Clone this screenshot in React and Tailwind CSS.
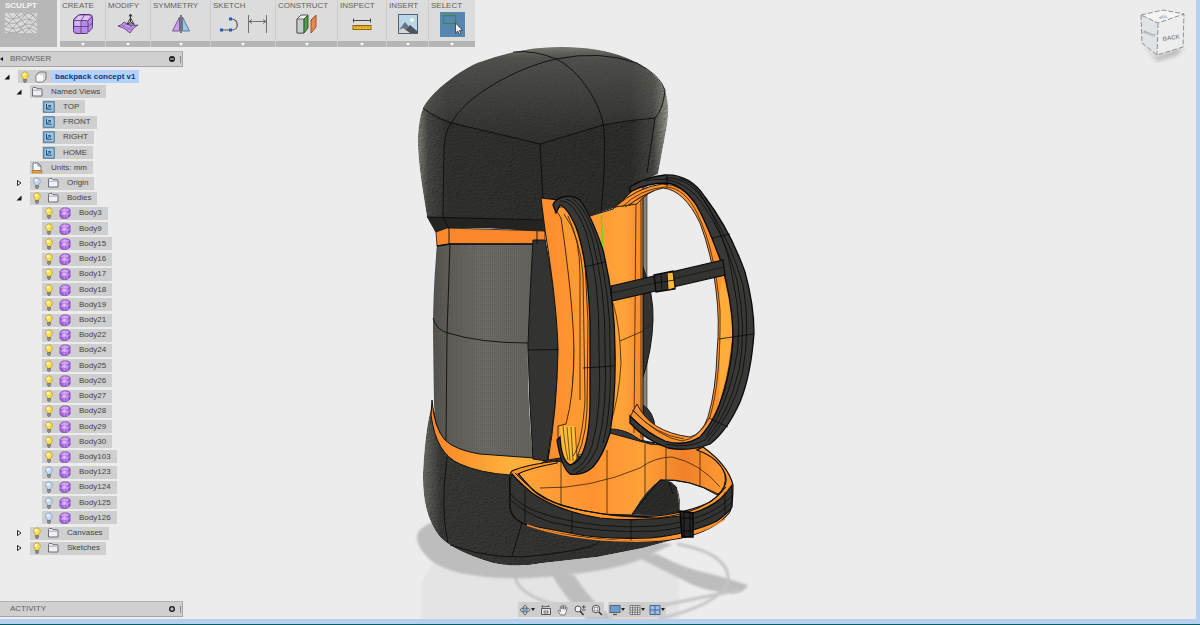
import { clsx } from 'clsx'

const TREE = [
  { level: 0, arrow: 'open', bulb: 'on', icon: 'component', label: 'backpack concept v1', active: true },
  { level: 1, arrow: 'open', icon: 'folder', label: 'Named Views' },
  { level: 2, icon: 'view', label: 'TOP' },
  { level: 2, icon: 'view', label: 'FRONT' },
  { level: 2, icon: 'view', label: 'RIGHT' },
  { level: 2, icon: 'view', label: 'HOME' },
  { level: 1, icon: 'units', label: 'Units: mm' },
  { level: 1, arrow: 'closed', bulb: 'off', icon: 'folder', label: 'Origin' },
  { level: 1, arrow: 'open', bulb: 'on', icon: 'folder', label: 'Bodies' },
  ...[3, 9, 15, 16, 17, 18, 19, 21, 22, 24, 25, 26, 27, 28, 29, 30, 103].map(n => ({
    level: 2, bulb: 'on', icon: 'body', label: `Body${n}`,
  })),
  ...[123, 124, 125, 126].map(n => ({ level: 2, bulb: 'off', icon: 'body', label: `Body${n}` })),
  { level: 1, arrow: 'closed', bulb: 'on', icon: 'folder', label: 'Canvases' },
  { level: 1, arrow: 'closed', bulb: 'on', icon: 'folder', label: 'Sketches' },
]

const INDENT = ['w-[18px] pr-2', 'w-[30px] pr-2', 'w-[42px]']

function Bulb({ on }) {
  return (
    <svg viewBox="0 0 12 12" className="size-3 shrink-0" aria-hidden="true">
      <path d="M6 .8a3.4 3.4 0 0 1 2 6.1L7.6 8.4H4.4L4 6.9A3.4 3.4 0 0 1 6 .8z" fill={on ? '#ffe24a' : '#c4daf8'} stroke={on ? '#b5942d' : '#7d93b8'} strokeWidth=".7" />
      <circle cx="5" cy="3.3" r="1.3" fill="#fff" opacity=".85" />
      <path d="M4.5 8.5h3v2L6.7 11.5H5.3l-.8-1z" fill="#8b8b8b" stroke="#555" strokeWidth=".5" />
    </svg>
  )
}

function TreeIcon({ name }) {
  return (
    <svg viewBox="0 0 12 12" className="size-3 shrink-0" aria-hidden="true">
      {name === 'component' && (
        <>
          <path d="M1 4.500 3.500 1.500Q4 1 5 1h5q1 0 1 1v6l-2.500 2.500q-.5.5-1 .5H2q-1 0-1-1z" fill="#d8d8d8" stroke="#5a5a5a" strokeWidth=".8" />
          <rect x="1.500" y="4" width="6.500" height="6.500" rx="1" fill="#fafafa" />
        </>
      )}
      {name === 'folder' && (
        <>
          <path d="M1.500 10v-7.500q0-1 1-1h2.500l1 1.200h4q1 0 1 1V10z" fill="#eef0f4" stroke="#5c616b" strokeWidth=".9" />
          <path d="M2 4.200h8.500" stroke="#9aa0ab" strokeWidth=".8" />
        </>
      )}
      {name === 'view' && (
        <>
          <rect x=".8" y=".8" width="10.4" height="10.4" fill="#9fc3df" stroke="#3c6f97" />
          <path d="M3.500 2.800v5.400h5.200M4 7.700l3-3M5.300 4.500h2v2" fill="none" stroke="#1e5079" />
        </>
      )}
      {name === 'units' && (
        <>
          <path d="M2 8.500v-7.500h5l3 3v4.500z" fill="#f7f7fa" stroke="#5e6370" strokeWidth=".8" />
          <path d="M7 1v3h3" fill="none" stroke="#5e6370" strokeWidth=".8" />
          <rect x="1.200" y="8.800" width="9.800" height="2.200" fill="#f2a73a" stroke="#a76a14" strokeWidth=".6" />
        </>
      )}
      {name === 'body' && (
        <>
          <path d="M1 3.500 3.500 1h5L11 2.500V9l-3 2.300H3L1 9.500z" fill="#a463dc" stroke="#7434b0" strokeWidth=".8" />
          <path d="M1.500 3.700 4 1.500h4.300l2 1.300L8 4.400H3z" fill="#cf9ef3" />
          <path d="M3.300 5h4v2h-4z" fill="#d9b3f7" />
          <path d="M1.200 6.600 3 7.500h5l3-1.800M5.200 4.500v6.600M8 4.500v6.500M5 1.300l1 3" fill="none" stroke="#e6ccfb" strokeWidth=".5" />
        </>
      )}
    </svg>
  )
}

function TreeRow({ item }) {
  const { level, arrow, bulb, icon, label, active } = item
  return (
    <li className="flex h-[13px] items-center">
      <span className={clsx('flex shrink-0 justify-end', INDENT[level])}>
        {arrow && (
          <button type="button" aria-label={`Toggle ${label}`}>
            <svg viewBox="0 0 6 6" className="size-[6px]">
              {arrow === 'open'
                ? <path d="M5.500.500v5H.500z" fill="#111" />
                : <path d="M1.500.500 5 3 1.500 5.500z" fill="#fff" stroke="#111" strokeWidth=".9" />}
            </svg>
          </button>
        )}
      </span>
      <span className="flex h-full items-center bg-[#cfcfcf]">
        {bulb && <span className="pl-px"><Bulb on={bulb === 'on'} /></span>}
        <span className={clsx(level === 0 ? 'px-1' : bulb ? 'pr-2 pl-1' : 'pr-2 pl-px')}>
          <TreeIcon name={icon} />
        </span>
        <span className={clsx('flex h-full items-center', active ? 'bg-[#b3d3fc] px-1 font-bold text-[#14377d]' : 'pr-[6px] text-[#444]')}>
          {label}
        </span>
      </span>
    </li>
  )
}

function SculptIcon() {
  return (
    <svg viewBox="0 0 32 20" className="h-5 w-8">
      <rect width="32" height="20" fill="#dadada" />
      <path d="M0 3q8 6 16 0t16 2M0 8q8 5 16 0t16 2M0 13q9 5 17 0t15 2M0 18q9 4 17-1t15 2M0 7 12 20M3 0l17 20M10 0l18 20M18 0l14 15M26 0l6 7M14 0 0 14M22 0 3 20M30 0 12 20M32 7 20 20" fill="none" stroke="#999" strokeWidth=".7" />
    </svg>
  )
}

const CreateIcon = () => (
  <svg viewBox="0 0 22 22" className="size-[22px]">
    <path d="M1.500 8q0-2 1.500-3l3-2.500Q7 1.500 9 1.500h8q3.500 0 3.500 3v9q0 2-1.500 3l-2.500 2.500q-1 1.500-3 1.500H5q-3.500 0-3.500-3z" fill="#b98be8" stroke="#553573" />
    <path d="M2.500 7.500 6.500 3h12l-3 4z" fill="#dfc5fa" />
    <rect x="3" y="8" width="6" height="5" fill="#d3b2f5" />
    <path d="M2 7.500h12q2 0 2 2V19M16 8l4-4M2 13.500h14l4.500-3.500M9 7.500v13M9 7.500 12.500 2" fill="none" stroke="#553573" strokeWidth=".8" />
  </svg>
)

const ModifyIcon = () => (
  <svg viewBox="0 0 22 22" className="size-[22px]">
    <path d="M1 13q3 0 6-4 5 5 14 3-5 2-8 8-6-6-12-7z" fill="#c599ee" stroke="#6b488c" />
    <path d="m4 11.500 11 6M7 9q6 3 10 7M5 15l5-5M10 17l6-5" stroke="#8f62b5" fill="none" strokeWidth=".7" />
    <path d="M13.500 9V2M13.500 9 10 11.500M13.500 9l4 2.500M12 3.500l1.500-2.500L15 3.500" fill="none" stroke="#333" />
    <path d="M13.500 5 17 11h-7z" fill="none" stroke="#333" strokeWidth=".9" />
  </svg>
)

const SymmetryIcon = () => (
  <svg viewBox="0 0 22 22" className="size-[22px]">
    <path d="M9.500 4v14h-7z" fill="#c99df0" stroke="#775a92" />
    <path d="M12.500 4v14h7z" fill="#9ec4e8" stroke="#587b9c" />
    <path d="M11 2v18" stroke="#333" strokeWidth="1.200" />
  </svg>
)

const SketchIcon = () => (
  <svg viewBox="0 0 50 22" className="h-[22px] w-[50px]">
    <path d="M3 17h11c7 0 7-10 0-11h-2" fill="none" stroke="#4d5663" strokeWidth="1.200" />
    <path d="M2 15.500h3v3H2zM11 15.500h3v3h-3zM11 4.500h3v3h-3z" fill="#245dbb" />
    <path d="M30.500 2v18M48.500 2v18M31 8.500h17M34 6.500l-3 2 3 2M45 6.500l3 2-3 2" fill="none" stroke="#666" strokeWidth=".9" />
  </svg>
)

const ConstructIcon = () => (
  <svg viewBox="0 0 22 22" className="size-[22px]">
    <path d="M1 6 5 2h7l-4 4v14H1z" fill="#eee" stroke="#555" />
    <path d="M1 6h7v14H1z" fill="#c9cccf" stroke="#555" strokeWidth=".8" />
    <path d="M8 6l4-4v13l-4 5z" fill="#539b4b" stroke="#2d5c2a" />
    <path d="m15 7 5-5v12l-5 6z" fill="#ec8654" stroke="#a04c22" />
  </svg>
)

const InspectIcon = () => (
  <svg viewBox="0 0 22 22" className="size-[22px]">
    <path d="M2 7.500h18M2.500 5.500v4M19.500 5.500v4" stroke="#444" fill="none" />
    <rect x="2" y="12.500" width="18" height="4" fill="#f6bd24" stroke="#8a6510" />
    <path d="M5 13v2M8 13v1.500M11 13v2M14 13v1.500M17 13v2" stroke="#8a6510" strokeWidth=".7" />
  </svg>
)

const InsertIcon = () => (
  <svg viewBox="0 0 22 22" className="size-[22px]">
    <rect x="1.500" y="1.500" width="19" height="19" fill="#b9d8ee" stroke="#52616f" />
    <circle cx="15" cy="7" r="2" fill="#fff6c0" />
    <path d="M2 17l6-8 5 6v5H2z" fill="#6b737c" />
    <path d="m7 20 6-8 7 6v2z" fill="#4c545e" />
    <path d="m2 17 4-2 7 5H2z" fill="#d3d8dc" />
  </svg>
)

const SelectIcon = () => (
  <svg viewBox="0 0 25 25" className="size-[25px]">
    <rect width="25" height="25" fill="#5587b1" />
    <rect x="3.500" y="3.500" width="12" height="8" fill="none" stroke="#42883c" strokeWidth="1.200" />
    <path d="M15.500 11v10l2.300-2 1.500 3.300 1.500-.8-1.400-3 3-.3z" fill="#fff" stroke="#333" strokeWidth=".8" />
  </svg>
)

const TOOLS = [
  { label: 'CREATE', Icon: CreateIcon, width: 'w-[46px]' },
  { label: 'MODIFY', Icon: ModifyIcon, width: 'w-[45px]' },
  { label: 'SYMMETRY', Icon: SymmetryIcon, width: 'w-[60px]' },
  { label: 'SKETCH', Icon: SketchIcon, width: 'w-[65px]' },
  { label: 'CONSTRUCT', Icon: ConstructIcon, width: 'w-[62px]' },
  { label: 'INSPECT', Icon: InspectIcon, width: 'w-[49px]' },
  { label: 'INSERT', Icon: InsertIcon, width: 'w-[42px]' },
  { label: 'SELECT', Icon: SelectIcon, width: 'w-[46px]' },
]

function Toolbar() {
  return (
    <nav className="flex h-[47px] gap-[3px]" aria-label="Tools">
      <button type="button" className="flex w-[57px] flex-col items-start bg-[#b7b7b7] pt-px pl-[5px] font-bold text-[#f5f5f5]">
        <span className="leading-[10px]">SCULPT</span>
        <span className="pt-[2px]"><SculptIcon /></span>
      </button>
      <div className="flex bg-[#dcdcdc]">
        {TOOLS.map(({ label, Icon, width }) => (
          <button key={label} type="button" className={clsx('flex flex-col border-r border-[#cdcdcd] text-left text-[#606060] last:border-r-0', width)}>
            <span className="pt-px pl-[2px] leading-[10px]">{label}</span>
            <span className="flex w-full flex-1 items-center justify-center pb-1"><Icon /></span>
            <span className="flex h-[6px] w-full items-center justify-center bg-[#b5b5b5]">
              <svg viewBox="0 0 4 3" className="h-[3px] w-1"><path d="M0 0h4L2 3z" fill="#fff" /></svg>
            </span>
          </button>
        ))}
      </div>
    </nav>
  )
}

function PanelHeader({ title, collapse, plus }) {
  return (
    <header className="flex h-4 w-[183px] items-center border-y border-r border-t-[#b2b2b2] border-r-[#a5a5a5] border-b-[#a5a5a5] bg-[#d0d0d0] text-[#606060]">
      <span className="w-[10px]">
        {collapse && <svg viewBox="0 0 3 4" className="h-1 w-[3px]"><path d="M3 0v4L0 2z" fill="#111" /></svg>}
      </span>
      <h2 className="flex-1">{title}</h2>
      <button type="button" aria-label={`${title} options`} className="mr-[5px]">
        <svg viewBox="0 0 6 6" className="size-[6px]">
          <circle cx="3" cy="3" r="3" fill="#1c1c1c" />
          <path d={plus ? 'M1.200 3h3.600M3 1.200v3.600' : 'M1.200 3h3.600'} stroke="#eee" />
        </svg>
      </button>
      <span className="mr-px h-[7px] w-px bg-[#888]" />
    </header>
  )
}

const NAV_LEFT = [
  {
    name: 'Orbit', menu: true, art: (
      <>
        <ellipse cx="6" cy="6" rx="5" ry="2" fill="none" stroke="#555" strokeWidth=".8" />
        <ellipse cx="6" cy="6" rx="2" ry="5" fill="none" stroke="#555" strokeWidth=".8" />
        <circle cx="6" cy="6" r="1.500" fill="#5da4e6" />
      </>
    ),
  },
  {
    name: 'Look at', art: (
      <>
        <path d="M1.500 4.500h9v6h-9z" fill="#e8e8e8" stroke="#555" />
        <path d="M4 7h4v2H4zM2 2.500h7M3 1 1.500 2.500 3 4M8 1l1.500 1.500" fill="none" stroke="#555" strokeWidth=".8" />
      </>
    ),
  },
  {
    name: 'Pan', art: (
      <path d="M3.500 11 1 7q0-1.200 1.200-.6L3.300 7.500V2.500q.9-1 1.400 0L5 5V1.500q.9-1 1.500 0V5l.6-3q1-.8 1.400.2L8 5.500l1-2q1-.5 1.200.5L9 8.500 8 11z" fill="#f2f2f2" stroke="#555" strokeWidth=".7" />
    ),
  },
  {
    name: 'Zoom', art: (
      <>
        <circle cx="4" cy="5" r="3" fill="#eef4f8" stroke="#555" />
        <path d="m6 7 3.500 4" stroke="#333" strokeWidth="1.500" />
        <path d="M8 3h3.500M9.750 1.200v3.600M8 6h3.500" stroke="#333" strokeWidth=".8" />
      </>
    ),
  },
  {
    name: 'Fit', art: (
      <>
        <circle cx="5" cy="5" r="3.800" fill="#e4e4e4" stroke="#555" />
        <rect x="3.300" y="3.300" width="3.500" height="3.500" fill="#fff" stroke="#777" strokeWidth=".6" />
        <path d="M8 8l3 3" stroke="#333" strokeWidth="1.500" />
      </>
    ),
  },
]

const NAV_RIGHT = [
  {
    name: 'Display settings', menu: true, art: (
      <>
        <rect x="1" y="1.500" width="10" height="7" fill="#6c9dd2" stroke="#58636e" />
        <path d="M4 10.500h4" stroke="#555" strokeWidth="1.300" />
      </>
    ),
  },
  {
    name: 'Grid and snaps', menu: true, art: (
      <path d="M1 1.500h10v9H1zM3.500 1.500v9M6 1.500v9M8.500 1.500v9M1 3.750h10M1 6h10M1 8.250h10" fill="#eee" stroke="#676767" strokeWidth=".8" />
    ),
  },
  {
    name: 'Viewports', menu: true, art: (
      <path d="M1 1.500h10v9H1zM6 1.500v9M1 6h10" fill="#9fc0e5" stroke="#3e6899" />
    ),
  },
]

function NavGroup({ items, gap }) {
  return (
    <div className={clsx('flex h-[15px] items-center bg-[#cecece] px-px', gap)}>
      {items.map(({ name, menu, art }) => (
        <button key={name} type="button" aria-label={name} className="flex items-center">
          <svg viewBox="0 0 12 12" className="size-3">{art}</svg>
          {menu && <svg viewBox="0 0 4 3" className="h-[3px] w-1"><path d="M0 0h4L2 3z" fill="#222" /></svg>}
        </button>
      ))}
    </div>
  )
}

function ViewCube() {
  return (
    <svg viewBox="0 0 60 60" className="absolute top-[5px] right-1 size-[60px]" role="img" aria-label="View cube">
      <defs>
        <filter id="cubeBlur"><feGaussianBlur stdDeviation="2" /></filter>
      </defs>
      <path d="M8 36 24 52l28-10-7 8-20 6z" fill="#777" opacity=".5" filter="url(#cubeBlur)" />
      <path d="m9 10 22-5 21 4-26 9z" fill="#f5f5f5" />
      <path d="m9 10 17 8-1 32-15-12z" fill="#e2e3e4" />
      <path d="m26 18 26-9-1 33-26 8z" fill="#ededed" />
      <path d="m9 10 22-5 21 4-26 9zM9 10l1 28 15 12 26-8 1-33M26 18l-1 32" fill="none" stroke="#8b9098" strokeDasharray="5 2" />
      <text x="31" y="36" transform="rotate(-9 31 36)" fontSize="6" fontWeight="bold" fill="#8b9099">BACK</text>
      <text x="11" y="28" transform="rotate(20 11 28)" fontSize="4" fontWeight="bold" fill="#8f949d">RIGHT</text>
      <text x="35" y="10" transform="rotate(172 35 10)" fontSize="4" fontWeight="bold" fill="#8f949d">TOP</text>
    </svg>
  )
}

const TOP_BAG = 'M427 217C423 190 417 160 418 135Q419 118 423 108C430 94 455 73 477 63Q520 47 560 47Q600 47 627 58Q655 70 665 90Q670 105 667 125L658 174 645 180Q630 193 620 206L590 216 543 232Q480 226 447 229L436 233Z'
const BOTTOM_BAG = 'M432 404Q425 430 423 473Q422 515 440 537Q455 552 493 563Q515 568 543 563L597 557 643 548 680 538V500Q679 488 672 482L560 450 445 440Z'
const POCKET = 'M437 244Q433 290 433 330L434 404Q436 430 445 440 453 451 480 454L533 459Q527 400 528 345L533 242Z'
const BELT = 'M557 461Q525 465 512 471 509 474 510 482V507Q511 519 527 525 560 537 627 541 665 543 690 536 717 528 729 513 733 508 733 485 728 465 703 447L697 450Q719 458 725 474 730 488 710 502 690 512 657 516 622 518 597 513 545 505 530 487L518 474Q530 468 557 463Z'
const BELT_FACE = 'M512 474Q520 483 532 493 560 512 600 518 640 522 680 516 712 510 726 493L732 485V507Q728 513 717 521 690 534 650 538 600 540 570 533L527 525Q511 519 510 507V480Z'
const LEFT_STRAP = 'M553 205Q555 199 563 197 573 195 580 200 592 217 603 250 615 300 615 350 616 395 610 433 603 456 593 467 583 476 570 474 561 467 557 440L560 437Q561 460 570 465 579 463 583 452 590 435 590 400L590 323Q588 260 576 227 567 207 560 205L556 213Z'
const RIGHT_STRAP = 'M630 187Q645 177 665 175 690 174 705 197 730 230 745 272 754 305 754 333 751 375 740 402 727 431 710 444 690 452 668 448 645 440 630 423V416Q648 434 665 441 685 447 700 437 718 418 727 380 733 355 733 333 732 300 721 262 708 226 697 206 683 185 667 183 646 183 630 192Z'
const RIGHT_RIM = 'M615 207Q638 187 662 184 685 184 697 206 711 230 723 267 733 305 733 333 731 365 723 393 714 427 700 437 683 448 660 441L630 417 637 404Q650 432 690 437 702 434 708 417 716 390 717 353 720 320 716 290 712 255 700 223 684 190 663 188 647 191 637 204Z'

function Backpack() {
  return (
    <svg viewBox="0 0 1196 619" className="absolute inset-0 size-full" role="img" aria-label="Backpack model">
      <defs>
        <linearGradient id="bagTop" x1="0" x2="1">
          <stop offset="0" stopColor="#8a8a82" />
          <stop offset=".04" stopColor="#4c4c49" />
          <stop offset=".12" stopColor="#343433" />
          <stop offset=".85" stopColor="#30302f" />
          <stop offset=".94" stopColor="#4a4a47" />
          <stop offset="1" stopColor="#a6a69e" />
        </linearGradient>
        <linearGradient id="sheen" x1="0" x2="0" y1="0" y2="1">
          <stop offset="0" stopColor="#99998f" stopOpacity=".7" />
          <stop offset=".12" stopColor="#707069" stopOpacity=".5" />
          <stop offset=".6" stopColor="#62625d" stopOpacity=".3" />
          <stop offset="1" stopColor="#444" stopOpacity=".1" />
        </linearGradient>
        <linearGradient id="bagBottom" x1="0" x2="1">
          <stop offset="0" stopColor="#72726c" />
          <stop offset=".07" stopColor="#3b3b39" />
          <stop offset=".9" stopColor="#343433" />
          <stop offset="1" stopColor="#66665f" />
        </linearGradient>
        <linearGradient id="pocket" x1="0" x2="1">
          <stop offset="0" stopColor="#55544f" />
          <stop offset=".15" stopColor="#605f5a" />
          <stop offset=".5" stopColor="#706e68" />
          <stop offset="1" stopColor="#696761" />
        </linearGradient>
        <linearGradient id="orange" x1="0" x2="1">
          <stop offset="0" stopColor="#ff8c2c" />
          <stop offset=".5" stopColor="#ff9a33" />
          <stop offset=".8" stopColor="#ffa43a" />
          <stop offset="1" stopColor="#f88a2b" />
        </linearGradient>
        <linearGradient id="hip" x1="0" x2="1">
          <stop offset="0" stopColor="#ffa63b" />
          <stop offset=".35" stopColor="#ff9230" />
          <stop offset=".6" stopColor="#ffa138" />
          <stop offset=".8" stopColor="#f08029" />
          <stop offset="1" stopColor="#ff9b35" />
        </linearGradient>
        <linearGradient id="lowerBand" x1="0" x2="1">
          <stop offset="0" stopColor="#f98527" />
          <stop offset=".7" stopColor="#ffb23b" />
          <stop offset="1" stopColor="#ffa637" />
        </linearGradient>
        <pattern id="mesh" width="2" height="2" patternUnits="userSpaceOnUse">
          <path d="M0 .5h2M.5 0v2" stroke="#3f3e3b" strokeWidth=".5" opacity=".35" />
        </pattern>
        <filter id="leather" x="0" y="0" width="1" height="1" colorInterpolationFilters="sRGB">
          <feTurbulence type="fractalNoise" baseFrequency=".45 .7" numOctaves="2" seed="4" result="noise" />
          <feDiffuseLighting in="noise" surfaceScale=".9" lightingColor="#fff" result="light">
            <feDistantLight azimuth="60" elevation="62" />
          </feDiffuseLighting>
          <feBlend in="SourceGraphic" in2="light" mode="multiply" result="mixed" />
          <feComposite in="mixed" in2="SourceGraphic" operator="in" />
        </filter>
        <filter id="soft"><feGaussianBlur stdDeviation="1" /></filter>
      </defs>

      {/* floor reflection and shadows */}
      <path d="M422 619v-35q5-20 25-30h210q22 8 22 32v33z" fill="#e4e4e4" filter="url(#soft)" />
      <path d="M598 619q30-8 62 0z" fill="#eed5cb" />
      <g fill="#bdbdbd" filter="url(#soft)">
        <path d="M430 523q-17 8-12 20 8 22 42 30 40 8 85 4 75-6 103-21l25-12-60-5-160-5z" />
        <path d="M552 575h22q15 24 39 44h-26q-23-22-35-44zM637 557l20-3q27 15 58 21l33 10q-3 7-15 9-26-3-40-9-30-15-56-28z" />
        <path d="M677 544q55 10 51 39-10 22-70 36M515 577q4 22 63 33M739 590q-20 4-75 15" fill="none" stroke="#c4c4c4" strokeWidth="3" />
      </g>

      {/* main bag */}
      <path d={BOTTOM_BAG} fill="url(#bagBottom)" filter="url(#leather)" />
      <path d={TOP_BAG} fill="url(#bagTop)" filter="url(#leather)" />
      <path d="M423 108C430 94 455 73 477 63Q520 47 560 47 600 47 627 58 655 70 665 90 667 105 655 118L603 125 540 144 452 123Z" fill="url(#sheen)" />
      <path d="M427 217 443 217 543 221V232Q480 226 447 229L436 233Z" fill="#232322" />
      <path d={POCKET} fill="url(#pocket)" />
      <path d={POCKET} fill="url(#mesh)" />
      <path d="M436 232 447 228 545 231V244H450L437 246Z" fill="#f9882c" stroke="#151515" strokeWidth=".8" />
      <path d="M437 246 450 244H533" fill="none" stroke="#111" strokeWidth="1.500" />
      <path d="M432 400Q434 428 445 440 455 450 480 454L548 459 540 464 512 471 510 475Q480 473 460 464 436 454 431 415Z" fill="url(#lowerBand)" stroke="#111" />
      <path d="M533 240H545Q552 275 558 323V357Q557 405 547 461L533 459Q529 400 528 345 530 290 533 240Z" fill="#333332" stroke="#111" />

      <g fill="none" stroke="#0c0c0c" strokeWidth=".9">
        <path d="M423 108Q435 118 452 123L540 144 603 125Q628 120 655 118 663 110 665 90" />
        <path d="M443 217 444 150Q444 132 452 122C465 97 515 68 556 59Q600 50 637 63 660 75 665 90" />
        <path d="M513 52Q535 50 556 59C580 70 602 105 604 130Q606 160 601 213" />
        <path d="M540 144 543 200M655 118 647 173M443 217 449 229V244M427 217 543 220M537 231v13" />
        <path d="M433 318Q436 330 448 333 480 343 528 343M450 244 447 334 446 440M528 350 586 349" />
        <path d="M447 457Q440 510 448 543M522 523 512 556M450 545Q500 563 550 554 598 548 600 540" />
      </g>

      {/* back panel and frame */}
      <path d="M642 180h5v252h-5z" fill="#858580" stroke="#222" strokeWidth=".6" />
      <path d="M643 267Q654 295 653 320 652 350 643 377zM643 405Q654 412 655 428l-12 8z" fill="#333" stroke="#111" />
      <path d="M541 198 558 200 590 216 613 209Q629 195 643 180V440L610 450 548 460Q557 410 558 350 557 305 545 230Z" fill="url(#orange)" stroke="#111" />
      <path d="M601 215q2 24 1 33" fill="none" stroke="#45e618" strokeWidth="1.200" />
      <path d="M636 200 634 433M641 190V438M561 213Q575 310 574 350 573 405 566 440M620 341 643 331 653 322M613 303Q620 325 621 363 619 400 609 428" fill="none" stroke="#352008" strokeWidth=".8" />
      <path d="M608 429Q625 428 640 440L655 443 648 447 610 435z" fill="#383838" stroke="#111" />

      {/* hip belt */}
      <path d="M557 461 580 466 610 433 650 444 700 448Q719 456 725 474 727 488 717 495 690 478 660 480L632 515 600 514Q545 505 530 487L517 472Z" fill="url(#hip)" stroke="#151515" />
      <path d="M632 514Q645 490 660 480 668 478 677 487L680 512 657 516Z" fill="#2f2f2e" filter="url(#leather)" />
      <path d="M632 514 660 480Q690 479 718 494" fill="none" stroke="#111" />
      <path d="M540 488Q590 489 640 468 655 457 672 457 700 463 720 487M561 461V504M607 450V514M645 444V497M666 446V480M700 449V486" fill="none" stroke="#3b2309" strokeWidth=".8" />
      <path d={BELT} fill="#ff962f" stroke="#0d0d0d" strokeWidth="1.200" />
      <path d={BELT_FACE} fill="#333332" stroke="#0d0d0d" strokeWidth="1.200" />
      <path d="M515 473Q535 495 560 505 602 517 657 518 706 513 726 487" fill="none" stroke="#161616" />
      <g fill="none" stroke="#0c0c0c" strokeWidth=".8">
        <path d="M510 493Q519 507 550 516 600 530 657 526 710 520 732 496M511 500Q522 512 550 522 600 534 657 531 710 525 732 502" />
        <path d="M525 490V524M572 513V534M631 520V541M725 492V515M673 494 669 482" />
      </g>
      <path d="M527 525Q570 540 627 541 690 543 725 519" fill="none" stroke="#f78a2c" strokeWidth="1.500" />
      <path d="M680 511 693 513V537H682Z" fill="#252525" stroke="#050505" strokeWidth="1.500" />
      <path d="M684 512v24M690 513v24M680 518h13M681 531h12" stroke="#080808" />

      {/* near shoulder strap */}
      <path d="M556 210Q562 203 568 211 580 230 585 263L588 323 587 410Q585 450 570 468 557 463 558 426L566 424Q574 395 574 350 573 300 561 218Z" fill="#ff9932" stroke="#1a1006" strokeWidth=".8" />
      <path d="M560 426H575L577 458Q572 466 566 459 562 452 560 426Z" fill="#ffbd38" />
      <path d="M563 426Q565 448 568 460M567 427l3 34M571 427l2 34M575 427l2 32" fill="none" stroke="#543709" strokeWidth=".8" />
      <path d={LEFT_STRAP} fill="#383837" stroke="#090909" strokeWidth="1.300" />
      <g fill="none" stroke="#090909" strokeWidth=".8">
        <path d="M560 201Q574 200 586 232 600 280 599 350 602 410 592 446 585 466 572 471" />
        <path d="M566 199Q580 202 592 238 606 290 605 350 608 410 597 448 588 468 576 473" />
        <path d="M572 198Q587 208 598 245 611 300 610 350 612 410 603 443" />
        <path d="M564 214Q580 235 583 275L585 400Q582 445 573 456M568 216Q580 240 580 275V400" stroke="#2a1a07" />
        <path d="M584 267 605 262M583 368 614 366" />
      </g>

      {/* far shoulder strap */}
      <path d={RIGHT_RIM} fill="#ff9331" stroke="#171008" strokeWidth=".9" />
      <path d="M722 277Q731 300 732 335 728 375 719 400 721 340 719 300Z" fill="#ffad39" />
      <path d={RIGHT_STRAP} fill="#383837" stroke="#090909" strokeWidth="1.300" />
      <g fill="none" stroke="#090909" strokeWidth=".8">
        <path d="M645 181Q680 173 701 202 724 233 737 280 747 330 739 370 728 417 705 440 688 449 665 444" />
        <path d="M665 178Q690 176 709 208 731 243 743 285 751 330 742 375 732 415 708 441" />
        <path d="M680 178Q695 183 704 200 727 238 733 280 744 330 734 370 725 410 706 436" />
        <path d="M622 207Q640 189 665 187 685 187 698 215 715 250 720 310 721 380 710 417 698 439 682 441 660 438 632 410M625 207Q642 196 655 190M629 206Q639 196 650 193M634 411Q655 435 684 439" stroke="#30200b" />
        <path d="M712 238 730 234M719 339 753 334M667 176v11M709 418 728 427" />
      </g>

      {/* sternum strap */}
      <path d="M611 286 723 260 725 275 612 301Z" fill="#333332" stroke="#0b0b0b" strokeWidth="1.200" />
      <path d="M612 293 724 267" stroke="#111" strokeWidth=".7" />
      <path d="M654 275 673 271 675 289 656 292Z" fill="#2e2e2d" stroke="#070707" strokeWidth="1.300" />
      <path d="M667 273 673 272 675 288 668 290Z" fill="#ffb934" stroke="#171008" />
      <path d="M655 283 675 280M661 274 662 291" stroke="#070707" strokeWidth=".8" />
    </svg>
  )
}

export default function App() {
  return (
    <div className="flex h-screen flex-col overflow-hidden border-b border-[#075c66] font-['Liberation_Sans',Arial,sans-serif] text-[8px] leading-[10px]">
      <div className="flex min-h-0 flex-1 border-r-4 border-b-[5px] border-[#b5d1ee]">
        <main className="relative flex min-w-0 flex-1 flex-col bg-[#ececec]">
          <Backpack />
          <ViewCube />
          <div className="relative flex min-h-0 flex-1 flex-col items-start">
            <Toolbar />
            <section className="flex flex-col gap-[3px] pt-1">
              <PanelHeader title="BROWSER" collapse />
              <ul className="flex h-[485px] flex-col justify-between">
                {TREE.map(item => <TreeRow key={item.label} item={item} />)}
              </ul>
            </section>
          </div>
          <footer className="relative grid grid-cols-[1fr_auto_1fr] items-end pr-3 pb-[2px]">
            <PanelHeader title="ACTIVITY" plus />
            <div className="flex gap-1">
              <NavGroup items={NAV_LEFT} gap="gap-[5px]" />
              <NavGroup items={NAV_RIGHT} gap="gap-1" />
            </div>
          </footer>
        </main>
      </div>
    </div>
  )
}
